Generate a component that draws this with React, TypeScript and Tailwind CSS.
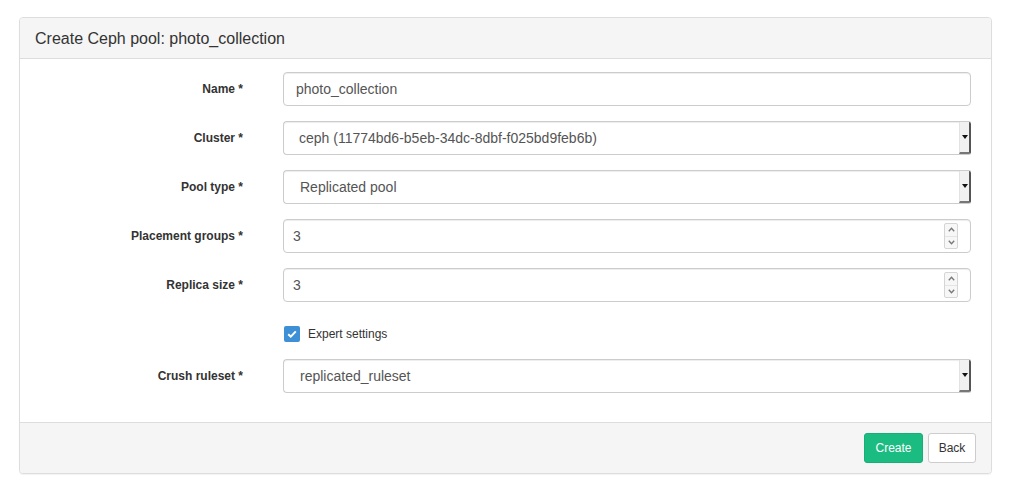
import React from "react";

const font = { fontFamily: '"Liberation Sans", Arial, sans-serif' };

function Label({ children }: { children: React.ReactNode }) {
  return (
    <div className="w-[223px] shrink-0 text-right text-[12px] font-bold text-[#333]">
      {children}
    </div>
  );
}

function TextInput({ value }: { value: string }) {
  return (
    <div className="flex h-[34px] flex-1 items-center rounded-[4px] border border-[#ccc] bg-white pl-[12px] text-[14px] text-[#555] shadow-[inset_0_1px_1px_rgba(0,0,0,0.075)]">
      {value}
    </div>
  );
}

function SelectBox({ value, pl }: { value: string; pl: string }) {
  return (
    <div className="flex h-[34px] flex-1 rounded-l-[4px] rounded-r-[2px] border border-r-0 border-[#ccc] bg-white text-[14px] text-[#555] shadow-[inset_0_1px_1px_rgba(0,0,0,0.075)]">
      <div className={`flex flex-1 items-center ${pl}`}>{value}</div>
      <div className="flex w-[12px] items-center justify-center rounded-r-[2px] border-l border-[#e2e2e2] border-r-2 border-r-[#555] border-b-2 border-b-[#777] bg-[#f1f1f1]">
        <svg width="6" height="4" viewBox="0 0 6 4">
          <path d="M0 0 L6 0 L3 4 Z" fill="#111" />
        </svg>
      </div>
    </div>
  );
}

function NumberInput({ value }: { value: string }) {
  return (
    <div className="flex h-[34px] flex-1 items-center rounded-[4px] border border-[#ccc] bg-white pl-[9px] pr-[12px] text-[14px] text-[#555] shadow-[inset_0_1px_1px_rgba(0,0,0,0.075)]">
      <div className="flex-1">{value}</div>
      <div className="flex h-[26px] w-[14px] flex-col rounded-[2px] border border-[#d5d5d5] bg-[#f7f7f7]">
        <div className="flex flex-1 items-center justify-center border-b border-[#e4e4e4]">
          <svg width="7" height="5" viewBox="0 0 7 5">
            <path d="M0.8 4.2 L3.5 1.2 L6.2 4.2" stroke="#777" strokeWidth="1.3" fill="none" />
          </svg>
        </div>
        <div className="flex flex-1 items-center justify-center">
          <svg width="7" height="5" viewBox="0 0 7 5">
            <path d="M0.8 0.8 L3.5 3.8 L6.2 0.8" stroke="#777" strokeWidth="1.3" fill="none" />
          </svg>
        </div>
      </div>
    </div>
  );
}

function Row({ label, children }: { label: string; children: React.ReactNode }) {
  return (
    <div className="mb-[15px] flex h-[34px] items-center">
      <Label>{label}</Label>
      <div className="ml-[40px] flex flex-1">{children}</div>
    </div>
  );
}

export default function App() {
  return (
    <div className="min-h-[497px] bg-white pt-[17px]" style={font}>
      <div className="ml-[19px] w-[973px] rounded-[4px] border border-[#ddd] bg-white shadow-[0_1px_1px_rgba(0,0,0,0.05)]">
        <div className="flex h-[41px] items-center rounded-t-[3px] border-b border-[#ddd] bg-[#f5f5f5] px-[15px] pt-[1px] text-[16px] text-[#333]">
          Create Ceph pool: photo_collection
        </div>
        <div className="pb-[14px] pr-[20px] pt-[13px]">
          <Row label="Name *">
            <TextInput value="photo_collection" />
          </Row>
          <Row label="Cluster *">
            <SelectBox value="ceph (11774bd6-b5eb-34dc-8dbf-f025bd9feb6b)" pl="pl-[15px]" />
          </Row>
          <Row label="Pool type *">
            <SelectBox value="Replicated pool" pl="pl-[16px]" />
          </Row>
          <Row label="Placement groups *">
            <NumberInput value="3" />
          </Row>
          <Row label="Replica size *">
            <NumberInput value="3" />
          </Row>
          <div className="mb-[15px] flex h-[27px] items-start pt-[8px]">
            <div className="w-[223px] shrink-0" />
            <div className="ml-[41px] flex items-center">
              <div className="flex h-[16px] w-[16px] items-center justify-center rounded-[2px] bg-[#3d8fd6]">
                <svg width="10" height="8" viewBox="0 0 10 8">
                  <path d="M1.2 4.2 L3.8 6.6 L8.8 1.4" stroke="white" strokeWidth="2" fill="none" />
                </svg>
              </div>
              <span className="ml-[8px] text-[12px] text-[#333]">Expert settings</span>
            </div>
          </div>
          <Row label="Crush ruleset *">
            <SelectBox value="replicated_ruleset" pl="pl-[16px]" />
          </Row>
        </div>
        <div className="flex h-[51px] items-start justify-end gap-[5px] rounded-b-[3px] border-t border-[#ddd] bg-[#f5f5f5] px-[15px] pt-[10px]">
          <button className="h-[30px] w-[59px] rounded-[3px] border border-[#17ae78] bg-[#1bbc82] text-[12px] text-white">
            Create
          </button>
          <button className="h-[30px] w-[48px] rounded-[3px] border border-[#ccc] bg-white text-[12px] text-[#333]">
            Back
          </button>
        </div>
      </div>
    </div>
  );
}
